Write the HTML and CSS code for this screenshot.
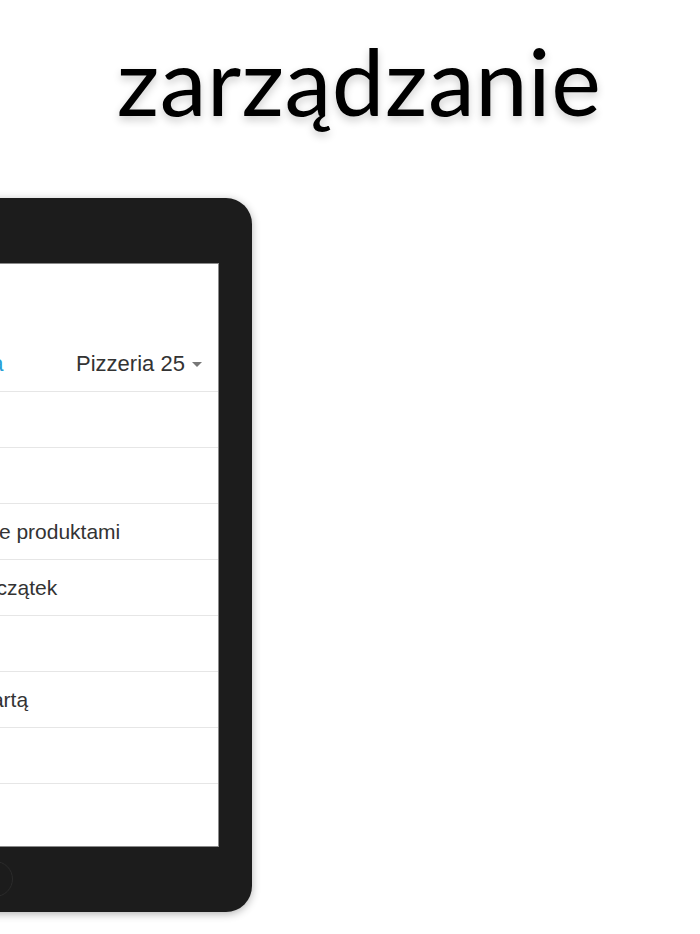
FILE: index.html
```
<html>
   <head>
      <meta charset="utf-8">
      <title>Zarządzanie</title>
      <link rel="stylesheet" href="styles.css">
   </head>
   <body>
      <div id="title">zarządzanie</div>
      <div id="tablet">
         <div id="screen">
            <div class="navbar">
               <a class="brand">Zamówienia</a>
               <span class="place">Pizzeria 25 <span class="caret"></span></span>
            </div>
            <div class="row">Start</div>
            <div class="row">Raporty</div>
            <div class="row">Zarządzanie produktami</div>
            <div class="row">Stan na początek</div>
            <div class="row">Klienci</div>
            <div class="row">Płatność kartą</div>
            <div class="row">Menu</div>
         </div>
         <div class="homebtn"></div>
      </div>
   </body>
</html>
```
FILE: styles.css
```
html {
   margin: 0px;
   padding: 0px;
}

body {
   margin: 0px;
   background: white;
   overflow: hidden;
   font-family: "Liberation Sans", Arial, sans-serif;
}

#title {
   font-family: "Lato", sans-serif;
   font-size: 94px;
   line-height: 100px;
   color: black;
   text-align: center;
   padding: 30px 0px 0px 18px;
   height: 168px;
   letter-spacing: 0.5px;
   text-shadow: 0px 4px 8px rgba(0, 0, 0, 0.2);
}

#tablet {
   width: 514px;
   margin-left: -262px;
   background-color: #1c1c1c;
   border-radius: 26px;
   padding: 65px 33px 0px 33px;
   box-sizing: border-box;
   height: 714px;
   box-shadow: 0px 2px 8px rgba(0, 0, 0, 0.3);
}

#screen {
   background: white;
   height: 584px;
   border: 1px solid #8a8a8a;
   box-sizing: border-box;
   overflow: hidden;
   font-size: 21px;
   color: #333;
}

.navbar {
   display: flex;
   justify-content: space-between;
   align-items: center;
   height: 55px;
   margin-top: 72px;
   padding: 0px 16px 0px 113px;
   border-bottom: 1px solid #e6e6e6;
   font-size: 22px;
}

.brand {
   color: #2a9fd6;
}

.caret {
   display: inline-block;
   border-top: 5px solid #777;
   border-left: 5px solid transparent;
   border-right: 5px solid transparent;
   vertical-align: middle;
   margin-left: 1px;
}

.row {
   height: 55px;
   line-height: 55px;
   padding-left: 123px;
   border-bottom: 1px solid #e6e6e6;
   white-space: nowrap;
}

.homebtn {
   width: 34px;
   height: 34px;
   margin: 14px auto 0px auto;
   border: 1px solid #2b2b2b;
   border-radius: 50%;
}
```
